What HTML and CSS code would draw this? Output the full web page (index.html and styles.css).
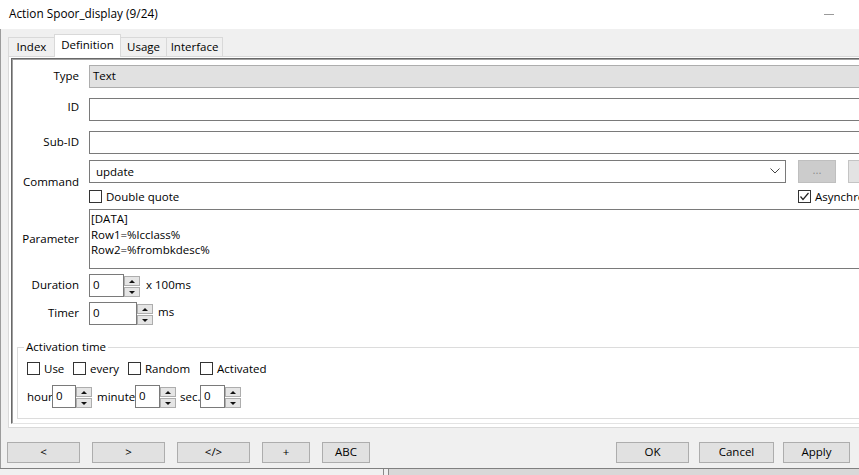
FILE: index.html
```html
<!DOCTYPE html>
<html>
<head>
<meta charset="utf-8">
<link rel="stylesheet" href="styles.css">
</head>
<body>
<div class="window">
  <div class="titlebar"><span class="title">Action Spoor_display (9/24)</span><span class="min"></span></div>
  <div class="client">
    <div class="tabs">
      <div class="tab t-index">Index</div>
      <div class="tab sel t-def">Definition</div>
      <div class="tab t-usage">Usage</div>
      <div class="tab t-iface">Interface</div>
    </div>
    <div class="page">
      <div class="sunken">
        <div class="form">
          <div class="row r-type"><span class="lbl">Type</span><div class="field ro">Text</div></div>
          <div class="row r-id"><span class="lbl">ID</span><div class="field"></div></div>
          <div class="row r-sub"><span class="lbl">Sub-ID</span><div class="field"></div></div>
          <div class="row r-cmd"><span class="lbl">Command</span>
            <div class="cmdgrid">
              <div class="combo"><span>update</span><svg class="chev" width="10" height="6" viewBox="0 0 10 6"><polyline points="0.5,0.5 5,5 9.5,0.5" fill="none" stroke="#444" stroke-width="1"/></svg></div>
              <div class="btn dis">...</div>
              <div class="btn dis2"></div>
              <div class="chk"><span class="box"></span>Double quote</div>
              <div class="chk async"><span class="box"><svg width="11" height="11" viewBox="0 0 11 11"><polyline points="1.5,5.5 4,8.5 9.5,2" fill="none" stroke="#222" stroke-width="1.2"/></svg></span>Asynchronous</div>
            </div>
          </div>
          <div class="row r-param"><span class="lbl">Parameter</span><div class="textarea">[DATA]<br>Row1=%lcclass%<br>Row2=%frombkdesc%</div></div>
          <div class="row r-dur"><span class="lbl">Duration</span>
            <div class="spin"><div class="sp-in w35">0</div><div class="sp-btns"><div class="sp-b up"></div><div class="sp-b dn"></div></div></div>
            <span class="after a-dur">x 100ms</span>
          </div>
          <div class="row r-timer"><span class="lbl">Timer</span>
            <div class="spin"><div class="sp-in w48">0</div><div class="sp-btns"><div class="sp-b up"></div><div class="sp-b dn"></div></div></div>
            <span class="after a-timer">ms</span>
          </div>
        </div>
        <fieldset class="group">
          <legend>Activation time</legend>
          <div class="chkrow">
            <div class="chk c-use"><span class="box"></span>Use</div>
            <div class="chk c-every"><span class="box"></span>every</div>
            <div class="chk c-random"><span class="box"></span>Random</div>
            <div class="chk c-act"><span class="box"></span>Activated</div>
          </div>
          <div class="timerow">
            <span class="tl l-hour">hour</span>
            <div class="spin"><div class="sp-in w24">0</div><div class="sp-btns"><div class="sp-b up"></div><div class="sp-b dn"></div></div></div>
            <span class="tl l-min">minute</span>
            <div class="spin"><div class="sp-in w25">0</div><div class="sp-btns"><div class="sp-b up"></div><div class="sp-b dn"></div></div></div>
            <span class="tl l-sec">sec.</span>
            <div class="spin"><div class="sp-in w25">0</div><div class="sp-btns"><div class="sp-b up"></div><div class="sp-b dn"></div></div></div>
          </div>
        </fieldset>
      </div>
    </div>
    <div class="bar">
      <div class="pbtn b-prev">&lt;</div>
      <div class="pbtn b-next">&gt;</div>
      <div class="pbtn b-code">&lt;/&gt;</div>
      <div class="pbtn b-plus">+</div>
      <div class="pbtn b-abc">ABC</div>
      <div class="pbtn b-ok">OK</div>
      <div class="pbtn b-cancel">Cancel</div>
      <div class="pbtn b-apply">Apply</div>
    </div>
  </div>
  <div class="bottom"><div class="bt-left"></div><div class="bt-mid"></div><div class="bt-right"></div></div>
</div>
</body>
</html>
```
FILE: styles.css
```css
html, body {
  margin: 0;
  padding: 0;
}
body {
  width: 859px;
  height: 475px;
  overflow: hidden;
  background: #f0f0f0;
  font-family: "Open Sans", "Noto Sans", "Liberation Sans", sans-serif;
  font-size: 11.5px;
  line-height: 15px;
  color: #000;
}
.window {
  width: 859px;
  height: 475px;
  display: flex;
  flex-direction: column;
  overflow: hidden;
}
.titlebar {
  height: 29px;
  flex-shrink: 0;
  background: #fff;
  display: flex;
  align-items: center;
  padding-left: 9px;
  padding-bottom: 3px;
  box-sizing: border-box;
}
.title {
  font-size: 11.8px;
}
.min {
  margin-left: auto;
  margin-right: 25px;
  width: 10px;
  height: 1px;
  background: #9a9a9a;
  margin-top: 2px;
}
.client {
  flex: 1;
  display: flex;
  flex-direction: column;
  background: #f0f0f0;
  box-shadow: inset 1px 0 0 #9c9c9c;
  min-height: 0;
}
.tabs {
  height: 27px;
  flex-shrink: 0;
  display: flex;
  align-items: flex-end;
  padding-left: 8px;
}
.tab {
  box-sizing: border-box;
  height: 19px;
  border: 1px solid #d9d9d9;
  border-bottom: none;
  background: #f0f0f0;
  text-align: center;
  line-height: 17px;
}
.tab.sel {
  height: 23px;
  background: #fff;
  margin-bottom: -1px;
  position: relative;
  z-index: 1;
  line-height: 20px;
}
.t-index { width: 47px; }
.t-def { width: 67px; margin-left: -1px; }
.t-usage { width: 47px; margin-left: -1px; }
.t-iface { width: 57px; margin-left: -1px; }
.page {
  margin-left: 8px;
  width: 920px;
  flex-shrink: 0;
  box-sizing: border-box;
  border: 1px solid #d9d9d9;
  background: #fff;
  padding: 1px 0 3px 2px;
}
.sunken {
  border: 1px solid;
  border-color: #696969 #e3e3e3 #e3e3e3 #696969;
  box-shadow: inset 1px 1px 0 #a0a0a0;
  padding: 1px 0 4px 1px;
}
.form {
  width: 873px;
  display: flex;
  flex-direction: column;
}
.row {
  display: flex;
  align-items: center;
}
.lbl {
  width: 66px;
  margin-right: 10px;
  flex-shrink: 0;
  text-align: right;
  padding-bottom: 2px;
}
.r-type { margin-top: 5px; }
.r-id, .r-sub { margin-top: 10px; }
.r-id .lbl { padding-bottom: 6px; }
.r-cmd { margin-top: 6px; }
.r-param, .r-dur, .r-timer { margin-top: 5px; }
.field {
  flex: 1;
  height: 23px;
  box-sizing: border-box;
  border: 1px solid #7a7a7a;
  background: #fff;
  padding-left: 3px;
  line-height: 19px;
}
.field.ro {
  background: #e1e1e1;
  border-color: #adadad;
}
.cmdgrid {
  flex: 1;
  display: grid;
  grid-template-columns: 1fr 38px 38px;
  grid-template-rows: 23px 15px;
  column-gap: 12px;
  row-gap: 6px;
}
.combo {
  box-sizing: border-box;
  border: 1px solid #7a7a7a;
  background: #fff;
  display: flex;
  align-items: center;
  padding-left: 6px;
  padding-bottom: 1px;
}
.chev {
  margin-left: auto;
  margin-right: 5px;
}
.btn {
  box-sizing: border-box;
  border: 1px solid #bfbfbf;
  text-align: center;
  line-height: 18px;
  color: #8d8d8d;
}
.btn.dis { background: #cccccc; }
.btn.dis2 { background: #e3e3e3; border-color: #c4c4c4; }
.chk {
  display: flex;
  align-items: center;
  gap: 4px;
  white-space: nowrap;
  line-height: 15px;
}
.box {
  width: 13px;
  height: 13px;
  box-sizing: border-box;
  border: 1px solid #333;
  background: #fff;
  flex-shrink: 0;
  display: flex;
  align-items: center;
  justify-content: center;
}
.chk.async {
  grid-column: 2 / 4;
}
.textarea {
  flex: 1;
  height: 60px;
  box-sizing: border-box;
  border: 1px solid #7a7a7a;
  padding: 1px 0 0 1px;
  line-height: 15.5px;
}
.spin {
  display: flex;
  align-items: center;
  flex-shrink: 0;
}
.sp-in {
  height: 23px;
  box-sizing: border-box;
  border: 1px solid #7a7a7a;
  background: #fff;
  padding-left: 3px;
  line-height: 19px;
}
.w35 { width: 35px; }
.w48 { width: 48px; }
.w24 { width: 24px; }
.w25 { width: 25px; }
.sp-btns {
  width: 16px;
  height: 21px;
  margin-top: 2px;
  display: flex;
  flex-direction: column;
  gap: 1px;
}
.sp-b {
  flex: 1;
  box-sizing: border-box;
  border: 1px solid #adadad;
  background: #e5e5e5;
  display: flex;
  align-items: center;
  justify-content: center;
}
.sp-b::before {
  content: "";
  width: 0;
  height: 0;
  border-left: 3px solid transparent;
  border-right: 3px solid transparent;
}
.sp-b.up::before { border-bottom: 3px solid #111; }
.sp-b.dn::before { border-top: 3px solid #111; }
.after { padding-bottom: 2px; }
.a-dur { margin-left: 6px; }
.a-timer { margin-left: 5px; padding-bottom: 4px; }
.group {
  margin: 14px 0 0 4px;
  border: 1px solid #dcdcdc;
  padding: 0 0 10px 9px;
}
.group legend {
  margin-left: -3px;
  padding: 0 2px;
  line-height: 16px;
}
.chkrow {
  display: flex;
  height: 16px;
  align-items: center;
  margin-top: 6px;
}
.chkrow .chk { padding-bottom: 1px; }
.c-use { width: 46px; }
.c-every { width: 55px; }
.c-random { width: 72px; }
.timerow {
  display: flex;
  align-items: center;
  margin-top: 8px;
  height: 23px;
}
.tl { white-space: nowrap; padding-bottom: 1px; }
.l-hour { width: 25px; }
.l-min { width: 38px; margin-left: 5px; }
.l-sec { width: 20px; margin-left: 4px; }
.bar {
  flex: 1;
  display: flex;
  align-items: flex-start;
  padding-top: 14px;
  box-sizing: border-box;
}
.pbtn {
  height: 21px;
  box-sizing: border-box;
  border: 1px solid #adadad;
  background: #e1e1e1;
  text-align: center;
  line-height: 18px;
  flex-shrink: 0;
}
.b-prev { width: 73px; margin-left: 7px; }
.b-next { width: 73px; margin-left: 12px; }
.b-code { width: 73px; margin-left: 12px; }
.b-plus { width: 48px; margin-left: 12px; }
.b-abc { width: 48px; margin-left: 12px; }
.b-ok { width: 73px; margin-left: auto; }
.b-cancel { width: 75px; margin-left: 10px; }
.b-apply { width: 67px; margin-left: 9px; margin-right: 9px; }
.bottom {
  height: 6px;
  flex-shrink: 0;
  border-top: 1px solid #808080;
  display: flex;
}
.bt-left {
  width: 383px;
  background: #f0f0f0;
  border-right: 1px solid #8a8a8a;
}
.bt-mid {
  width: 4px;
  background: #f0f0f0;
  border-right: 1px solid #8a8a8a;
}
.bt-right {
  flex: 1;
  background: #d8d8d8;
}
```
